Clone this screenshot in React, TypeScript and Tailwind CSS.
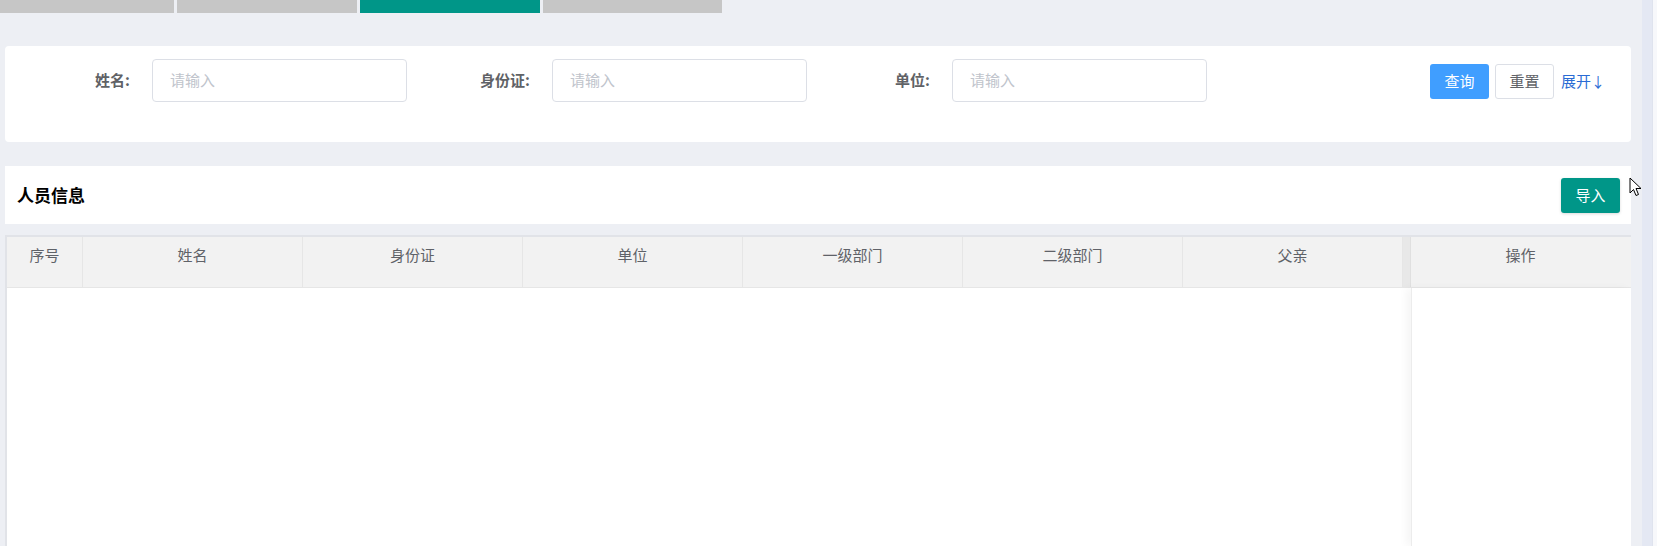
const font = { fontFamily: '"Noto Sans CJK SC", "Microsoft YaHei", sans-serif' };

const fields = ["姓名:", "身份证:", "单位:"];
const columns = ["姓名", "身份证", "单位", "一级部门", "二级部门", "父亲"];

const Cursor = () => (
  <svg
    className="absolute left-[1629px] top-[177px]"
    width="13"
    height="20"
    viewBox="0 0 13 20"
  >
    <path
      d="M1 1 L1 16 L4.5 12.5 L7 18.5 L9.5 17.5 L7 11.5 L12 11.5 Z"
      fill="#fff"
      stroke="#000"
      strokeWidth="1"
      strokeLinejoin="round"
    />
  </svg>
);

const App = () => {
  return (
    <div className="relative flex h-[546px] w-[1657px] overflow-hidden bg-white" style={font}>
      <div className="flex h-full w-[1642px] flex-col bg-[#edeff4]">
        {/* step bars */}
        <div className="flex h-[13px] gap-[3px]">
          <div className="w-[174px] bg-[#c6c6c6]" />
          <div className="w-[180px] bg-[#c6c6c6]" />
          <div className="w-[180px] bg-[#009688]" />
          <div className="w-[179px] bg-[#c6c6c6]" />
        </div>

        {/* search card */}
        <div className="ml-[5px] mt-[33px] flex h-[96px] w-[1626px] items-start rounded-[4px] bg-white pl-[2px] pt-[13px]">
          {fields.map((f) => (
            <div key={f} className="flex items-center">
              <label className="w-[145px] pr-[22px] text-right text-[15px] font-bold text-[#606266]">
                {f}
              </label>
              <div className="flex h-[43px] w-[255px] items-center rounded-[4px] border border-[#dcdfe6] pl-[17px] text-[15px] text-[#c0c4cc]">
                请输入
              </div>
            </div>
          ))}
          <div className="ml-auto mr-[26px] mt-[5px] flex items-center">
            <button className="h-[35px] w-[59px] rounded-[3px] bg-[#409eff] text-[15px] text-white">
              查询
            </button>
            <button className="ml-[6px] h-[35px] w-[59px] rounded-[3px] border border-[#dcdfe6] bg-white text-[15px] text-[#606266]">
              重置
            </button>
            <span className="ml-[7px] text-[15px] text-[#2a6bd4]">
              展开<span className="text-[14px]">↓</span>
            </span>
          </div>
        </div>

        {/* title bar */}
        <div className="ml-[5px] mt-[24px] flex h-[58px] w-[1626px] items-center bg-white pl-[12px] pr-[11px]">
          <span className="text-[17px] font-bold text-black">人员信息</span>
          <button className="ml-auto h-[35px] w-[59px] rounded-[3px] bg-[#009688] text-[15px] text-white shadow-[0_1px_3px_rgba(0,0,0,0.15)]">
            导入
          </button>
        </div>

        {/* table */}
        <div className="ml-[5px] mt-[11px] flex w-[1626px] flex-1 flex-col border-l-2 border-t-2 border-[#e1e3e8] bg-white">
          <div className="flex h-[51px] border-b border-[#e6e6e6] bg-[#f2f2f2] text-[15px] leading-[20px] text-[#5f6268]">
            <div className="w-[76px] border-r border-[#e6e6e6] pt-[8px] text-center">序号</div>
            {columns.map((c) => (
              <div key={c} className="w-[220px] border-r border-[#e6e6e6] pt-[8px] text-center">
                {c}
              </div>
            ))}
            <div className="w-[8px] border-r border-[#e0e0e0] bg-[#e8e8e8]" />
            <div className="w-[219px] pt-[8px] text-center">操作</div>
          </div>
          <div className="flex flex-1">
            <div className="flex-1" />
            <div className="w-[220px] border-l border-[#ececec] shadow-[-5px_0_8px_rgba(0,0,0,0.04)]" />
          </div>
        </div>
      </div>

      {/* scrollbar */}
      <div className="h-full w-[11px] border-r border-[#dfe3ee] bg-[#e4e8f3]" />
      <div className="h-full flex-1 bg-[#f7f8fb]" />

      <Cursor />
    </div>
  );
};

export default App;
